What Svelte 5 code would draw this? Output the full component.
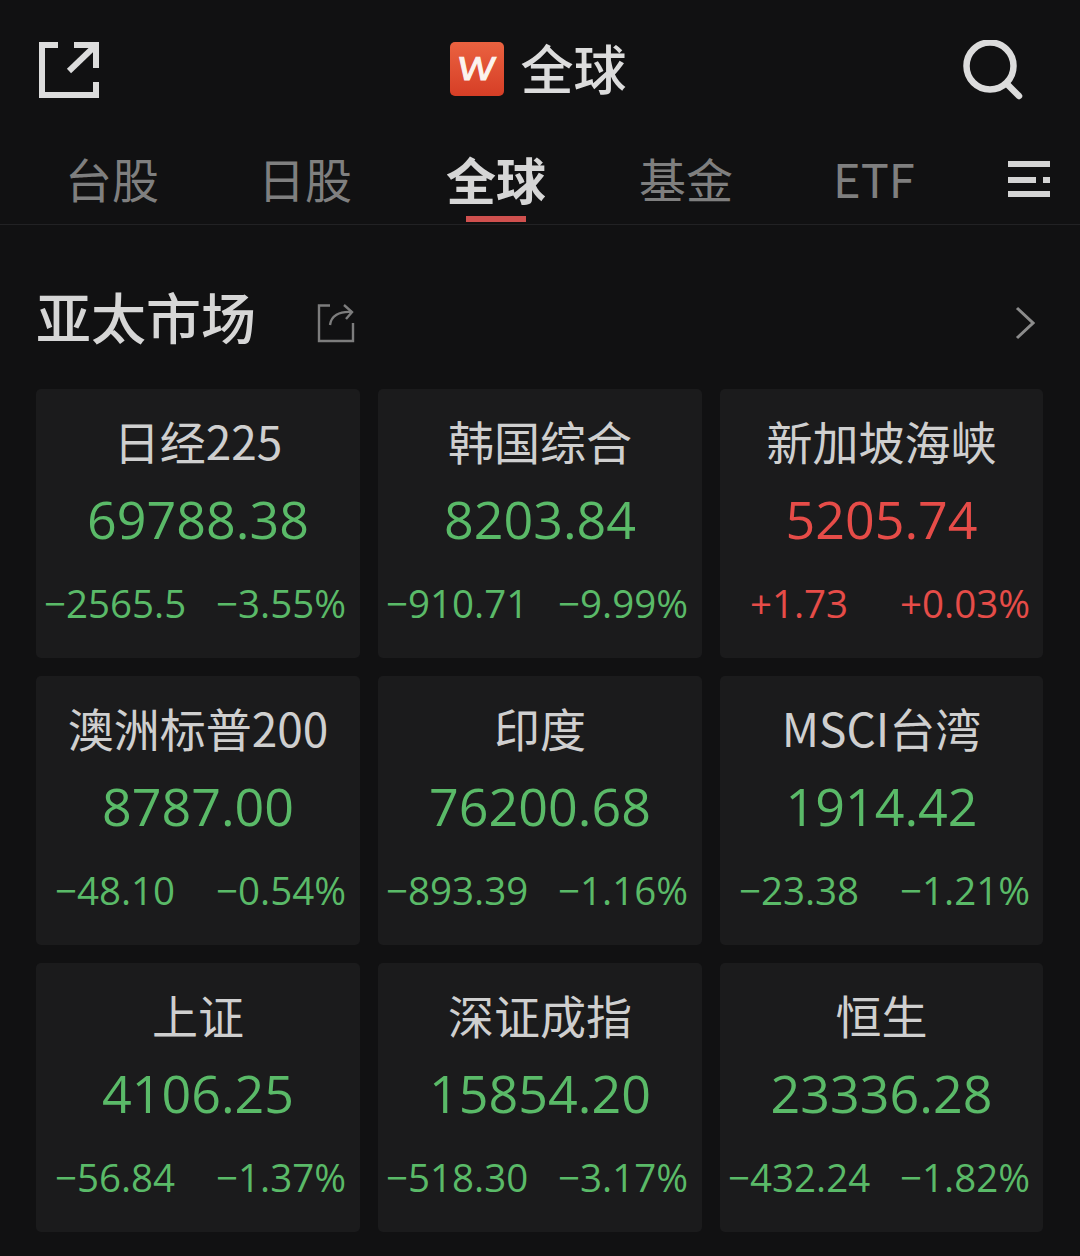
<script>
  const tabs = [
    { label: '台股' },
    { label: '日股' },
    { label: '全球', active: true },
    { label: '基金' },
    { label: 'ETF' }
  ];
  const cards = [
    ['日经225', '69788.38', '−2565.5', '−3.55%', 'down'],
    ['韩国综合', '8203.84', '−910.71', '−9.99%', 'down'],
    ['新加坡海峡', '5205.74', '+1.73', '+0.03%', 'up'],
    ['澳洲标普200', '8787.00', '−48.10', '−0.54%', 'down'],
    ['印度', '76200.68', '−893.39', '−1.16%', 'down'],
    ['MSCI台湾', '1914.42', '−23.38', '−1.21%', 'down'],
    ['上证', '4106.25', '−56.84', '−1.37%', 'down'],
    ['深证成指', '15854.20', '−518.30', '−3.17%', 'down'],
    ['恒生', '23336.28', '−432.24', '−1.82%', 'down']
  ];
</script>

<div class="page">
  <header class="top">
    <svg class="share" width="62" height="60" viewBox="0 0 62 60" fill="none" stroke="#dcdcdc" stroke-width="6">
      <path d="M20 5H4V55H58V42" />
      <path d="M36 5H58V28" />
      <path d="M56 7L31 31" />
    </svg>
    <div class="brand">
      <span class="logo"><span class="w">W</span></span>
      <span class="brand-text">全球</span>
    </div>
    <svg class="search" width="62" height="62" viewBox="0 0 62 62" fill="none" stroke="#dcdcdc" stroke-width="6.5">
      <circle cx="29" cy="26" r="23.5" />
      <path d="M46 44L58 56" stroke-linecap="round" />
    </svg>
  </header>

  <nav class="tabs">
    {#each tabs as t}
      <span class="tab" class:active={t.active}>{t.label}</span>
    {/each}
    <span class="menu"><i class="b1"></i><i class="b2"></i><i class="b2s"></i><i class="b3"></i></span>
  </nav>

  <section class="head">
    <h2>亚太市场</h2>
    <svg class="share-small" width="38" height="43" viewBox="0 0 38 43" fill="none" stroke="#7d7d7d" stroke-width="2.4">
      <path d="M13 5.5H2V41H36V23" />
      <path d="M13 25C14 16 22 11 35 12" />
      <path d="M27 5L35 12L29 19" />
    </svg>
    <svg class="chev" width="20" height="34" viewBox="0 0 20 34" fill="none" stroke="#8c8c8c" stroke-width="3">
      <path d="M2 2L18 17L2 32" />
    </svg>
  </section>

  <div class="grid">
    {#each cards as c}
      <article class="card">
        <div class="name">{c[0]}</div>
        <div class="value {c[4]}">{c[1]}</div>
        <div class="row {c[4]}"><span>{c[2]}</span><span>{c[3]}</span></div>
      </article>
    {/each}
  </div>
</div>

<style>
  :global(body) { margin: 0; background: #111112; }
  .page {
    width: 1080px; height: 1256px; background: #111112; overflow: hidden;
    font-family: "Noto Sans CJK SC", "Noto Sans", sans-serif;
    box-sizing: border-box;
  }
  .top { height: 138px; display: flex; align-items: flex-start; justify-content: space-between; padding: 40px 57px 0 38px; box-sizing: border-box; }
  .brand { display: flex; align-items: center; gap: 17px; margin: 0 0 0 15px; }
  .logo {
    width: 54px; height: 54px; border-radius: 5px; background: linear-gradient(#ea6240, #d63e26);
    display: flex; align-items: center; justify-content: center; margin-top: 2px;
  }
  .w {
    display: inline-block; color: #fbf3ef; font: 400 33px/1 "Liberation Sans", sans-serif;
    -webkit-text-stroke: 1px #fbf3ef; transform: scaleX(1.18) skewX(-6deg); margin-top: -1px;
  }
  .brand-text { color: #dcdcdc; font-size: 53px; line-height: 58px; font-weight: 500; margin-top: -2px; }
  .tabs {
    height: 87px; border-bottom: 1px solid #222224; display: flex; position: relative;
    box-sizing: border-box; padding-left: 65px; color: #7f7f7f; font-size: 47px;
  }
  .tab { line-height: 80px; height: 86px; position: relative; }
  .tab:nth-child(1) { margin-right: 99px; }
  .tab:nth-child(2) { margin-right: 94px; }
  .tab:nth-child(3) { margin-right: 93px; }
  .tab:nth-child(4) { margin-right: 100px; }
  .active { color: #d6d6d6; font-weight: 700; font-size: 50px; }
  .active::after {
    content: ""; position: absolute; left: 20px; right: 20px; bottom: 2px; height: 6px; background: #d0504e;
  }
  .menu { position: absolute; left: 1008px; top: 23px; width: 42px; height: 38px; display: block; }
  .menu i { position: absolute; background: #d4d4d4; height: 6px; left: 0; }
  .b1 { top: 0; width: 42px; }
  .menu .b2 { top: 16px; width: 28px; }
  .menu .b2s { top: 16px; left: 35px; width: 7px; }
  .b3 { top: 30px; width: 42px; }
  .head { height: 164px; position: relative; box-sizing: border-box; padding: 60px 0 0 36px; display: flex; align-items: flex-start; }
  h2 { margin: 0; color: #d6d6d6; font-size: 55px; line-height: 60px; font-weight: 500; }
  .share-small { margin: 15px 0 0 61px; }
  .chev { position: absolute; left: 1015px; top: 81px; }
  .grid { display: grid; grid-template-columns: 324px 324px 323px; gap: 18px; padding-left: 36px; }
  .card {
    height: 269px; background: #1b1b1c; border-radius: 5px; text-align: center; box-sizing: border-box; padding-top: 21px;
    font-family: "Open Sans", "Noto Sans CJK SC", sans-serif;
  }
  .name { color: #cfcfcf; font-size: 46px; line-height: 60px; font-family: "Noto Sans CJK SC", sans-serif; }
  .value { font-size: 52px; line-height: 64px; margin-top: 17px; }
  .row { display: grid; grid-template-columns: 142px 150px; column-gap: 20px; padding-left: 8px; font-size: 38.5px; line-height: 48px; margin-top: 28px; white-space: nowrap; }
  .down { color: #5aba68; }
  .up { color: #e64c48; }
</style>
